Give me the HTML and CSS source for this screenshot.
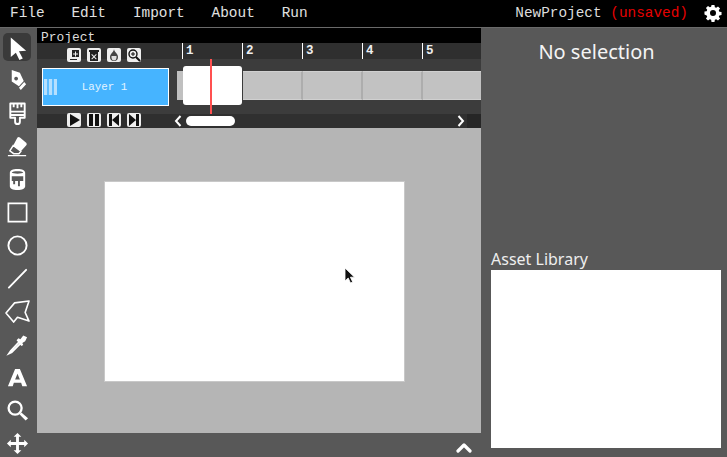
FILE: index.html
```html
<!DOCTYPE html>
<html lang="en">
<head>
<meta charset="utf-8">
<title>NewProject</title>
<link rel="stylesheet" href="styles.css">
</head>
<body>
<div class="app">
  <header class="menubar">
    <nav class="menu">
      <span>File</span><span>Edit</span><span>Import</span><span>About</span><span>Run</span>
    </nav>
    <div class="status">
      <span class="project-name">NewProject <span class="unsaved">(unsaved)</span></span>
      <svg class="gear" viewBox="0 0 24 24" width="16" height="16"><path fill="#fff" fill-rule="evenodd" d="M9.800 0h4.400l.6 3.300 2 .8 2.700-1.900 3.100 3.100-1.900 2.700.8 2 3.300.6v4.400l-3.300.6-.8 2 1.900 2.700-3.100 3.100-2.700-1.900-2 .8-.6 3.300H9.800l-.6-3.300-2-.8-2.700 1.900-3.100-3.100 1.900-2.700-.8-2L-.8 14.200V9.800l3.300-.6.8-2-1.900-2.700 3.100-3.100 2.700 1.900 2-.8zM12 7.500a4.500 4.500 0 1 0 0 9 4.500 4.500 0 0 0 0-9z"/></svg>
    </div>
  </header>
  <div class="workspace">
    <aside class="tools">
      <div class="tool active"><svg viewBox="0 0 24 24"><path d="M5 1.500l16 14-7.500.5 4 7.500-3.500 1.500-3.700-7.500L5 22z"/></svg></div>
      <div class="tool"><svg viewBox="0 0 24 24"><path fill-rule="evenodd" d="M6 1l8.500 3 4 8.500-5 5.500L6 13zM10.500 8a2 2 0 1 0 .1 0zM13.500 19.500l5.500-6 2 2.500-5.500 6z"/></svg></div>
      <div class="tool"><svg viewBox="0 0 24 24"><path fill="none" stroke="#fff" stroke-width="2" stroke-linejoin="round" d="M4.500 1.500h15v12h-15zM4.500 10h15M4.500 13.500v3h5v4a2.500 2.500 0 0 0 5 0v-4h5v-3M8 1.500v4M12 1.500v5M16 1.500v4"/></svg></div>
      <div class="tool"><svg viewBox="0 0 24 24"><path d="M12 2.500a2 2 0 0 1 2.500 0L21 8a2 2 0 0 1 .2 2.700L15.500 17 7.500 11z"/><path fill="none" stroke="#fff" stroke-width="1.500" d="M7.500 11l8 6-2 2.500H8L4 16.500zM2 21.500h19"/></svg></div>
      <div class="tool"><svg viewBox="0 0 24 24"><path fill-rule="evenodd" d="M12 1c5 0 8 1.500 8 4v14c0 2.500-3 4-8 4s-8-1.500-8-4V5c0-2.500 3-4 8-4zM6 4.800c1 1.500 11 1.500 12 0-1-1.800-11-1.800-12 0zM6 8.500v5h1.500v3.500h2v-3.500h3V19h2v-5.500h3.500v-5z"/></svg></div>
      <div class="tool"><svg viewBox="0 0 24 24"><path fill="none" stroke="#fff" stroke-width="1.800" d="M2.500 2.500h19v19h-19z"/></svg></div>
      <div class="tool"><svg viewBox="0 0 24 24"><circle cx="12" cy="12" r="9.500" fill="none" stroke="#fff" stroke-width="2"/></svg></div>
      <div class="tool"><svg viewBox="0 0 24 24"><path fill="none" stroke="#fff" stroke-width="2" stroke-linecap="round" d="M3 21.500L21 3"/></svg></div>
      <div class="tool"><svg viewBox="0 0 24 24"><path fill="none" stroke="#fff" stroke-width="1.700" stroke-linejoin="round" d="M0 13.500L9 3l15-2-4 12 4 9-12-4-4 5z"/></svg></div>
      <div class="tool"><svg viewBox="0 0 24 24"><path fill="none" stroke="#fff" stroke-width="1.800" d="M15 8L5 18.500l-2 3 3-1.500L16.500 9.500"/><path d="M13 5.500l2 1 3-4 4 2-2 4-3 2 1 2-2 1-5-6z"/></svg></div>
      <div class="tool"><svg viewBox="0 0 24 24"><path d="M9.500 3h5L22 21h-5l-1.200-3.500H8.200L7 21H2zM12 8l-2.500 6h5z" fill-rule="evenodd"/></svg></div>
      <div class="tool"><svg viewBox="0 0 24 24"><circle cx="9.500" cy="9.500" r="6.800" fill="none" stroke="#fff" stroke-width="2.400"/><path d="M14 16l2-2 7 6-2.500 2.500z"/></svg></div>
      <div class="tool"><svg viewBox="0 0 24 24"><path d="M12 1l4 4h-2.500v5.500H19V8l4 4-4 4v-2.500h-5.500V19H16l-4 4-4-4h2.500v-5.500H5V16l-4-4 4-4v2.500h5.500V5H8z"/></svg></div>
    </aside>
    <main class="center">
      <section class="timeline">
        <div class="title">Project</div>
        <div class="ruler-row">
          <div class="mini-icons">
            <span class="mini"><svg viewBox="0 0 14 14"><path fill="#222" d="M5 2h7v7H5zM2 5h1v7h7v-1H3V5zM8 3.500v2H6v1h2v2h1v-2h2v-1H9v-2z" fill-rule="evenodd"/></svg></span>
            <span class="mini"><svg viewBox="0 0 14 14"><path fill="#222" fill-rule="evenodd" d="M2 2h10v2h-1v9H3V4H2zM5 6l2 2 2-2 .7.700-2 2 2 2-.7.700-2-2-2 2-.7-.7 2-2-2-2z"/></svg></span>
            <span class="mini"><svg viewBox="0 0 14 14"><path fill="#444" d="M7 1c0 3-4 4.500-4 8a4 4 0 0 0 8 0c0-3.500-4-5-4-8z"/><path fill="#ddd" d="M4.500 8h5v2a2.500 2.500 0 0 1-5 0z"/></svg></span>
            <span class="mini"><svg viewBox="0 0 14 14"><circle cx="6" cy="6" r="4" fill="none" stroke="#111" stroke-width="1.400"/><path stroke="#111" stroke-width="2" d="M9 9l4 4"/><path stroke="#111" d="M4 6h4M6 4v4"/></svg></span>
          </div>
          <div class="ruler">
            <span class="tick">1</span><span class="tick">2</span><span class="tick">3</span><span class="tick">4</span><span class="tick">5</span>
          </div>
        </div>
        <div class="layers-row">
          <div class="layer">
            <span class="grip"><i></i><i></i><i></i></span>
            <span class="layer-name">Layer 1</span>
          </div>
          <div class="frames">
            <div class="frame-stub"></div>
            <div class="frame current"></div>
            <div class="frame"></div>
            <div class="frame"></div>
            <div class="frame"></div>
            <div class="frame"></div>
            <div class="playhead"></div>
          </div>
        </div>
        <div class="controls-row">
          <div class="playback">
            <span class="mini"><svg viewBox="0 0 14 14"><path fill="#111" d="M3 1l10 6-10 6z"/></svg></span>
            <span class="mini"><svg viewBox="0 0 14 14"><path fill="#111" d="M2 1h4v12H2zM8 1h4v12H8z"/></svg></span>
            <span class="mini"><svg viewBox="0 0 14 14"><path fill="#111" d="M2 1h3v12H2zM12 1v12L5 7z"/></svg></span>
            <span class="mini"><svg viewBox="0 0 14 14"><path fill="#111" d="M9 1h3v12H9zM2 1v12l7-6z"/></svg></span>
          </div>
          <div class="scrollbar">
            <svg class="arrow" viewBox="0 0 8 12"><path fill="none" stroke="#fff" stroke-width="2" d="M6.500 1L2 6l4.500 5"/></svg>
            <div class="thumb"></div>
            <svg class="arrow end" viewBox="0 0 8 12"><path fill="none" stroke="#fff" stroke-width="2" d="M1.500 1L6 6l-4.500 5"/></svg>
          </div>
          <div class="corner"></div>
        </div>
      </section>
      <section class="stage">
        <div class="canvas"></div>
        <svg class="cursor" viewBox="0 0 12 18" width="12" height="18"><path fill="#111" stroke="#fff" stroke-width=".8" d="M1 1v13l3.200-3 2.300 5 2.200-1-2.300-4.800H10.500z"/></svg>
      </section>
      <footer class="drawer">
        <svg viewBox="0 0 16 10" width="16" height="10"><path fill="none" stroke="#fff" stroke-width="3.200" stroke-linecap="round" stroke-linejoin="round" d="M2 8l6-6 6 6"/></svg>
      </footer>
    </main>
    <aside class="inspector">
      <h2 class="no-selection">No selection</h2>
      <h3 class="asset-title">Asset Library</h3>
      <div class="assets"></div>
    </aside>
  </div>
</div>
</body>
</html>
```

FILE: styles.css
```css
* { box-sizing: border-box; }
html, body { margin: 0; padding: 0; height: 100%; overflow: hidden; }
body { background: #585858; color: #fff; font-family: "Liberation Mono", monospace; }
.app { width: 727px; height: 457px; display: flex; flex-direction: column; }

.menubar { height: 28px; flex: none; background: #000; border-bottom: 1px solid #6a6a6a; display: flex; justify-content: space-between; align-items: center; padding: 0 6px 1px 10px; }
.menu { display: flex; gap: 26.900px; font-size: 14.400px; color: #e0e0e0; }
.status { display: flex; align-items: center; gap: 17px; font-size: 14.400px; }
.project-name { color: #dcdcdc; }
.unsaved { color: #e60000; }
.gear { display: block; margin-bottom: 1px; overflow: visible; }

.workspace { flex: 1; display: flex; min-height: 0; }

.tools { width: 37px; flex: none; display: flex; flex-direction: column; align-items: center; padding: 5px 3px 0 0; gap: 5px; background: #585858; }
.tool { width: 28px; height: 28px; flex: none; display: flex; align-items: center; justify-content: center; border-radius: 5px; }
.tool svg { width: 23px; height: 23px; fill: #fff; overflow: visible; }
.tool.active { background: #3a3a3a; }

.center { width: 444px; flex: none; display: flex; flex-direction: column; }

.timeline { flex: none; display: flex; flex-direction: column; }
.title { height: 15px; background: #000; font-size: 12.900px; line-height: 19px; padding-left: 4px; color: #dcdcdc; }
.ruler-row { height: 16px; display: flex; background: #2f2f2f; position: relative; z-index: 1; }
.mini-icons { width: 145px; flex: none; display: flex; gap: 6px; padding: 5px 0 0 30px; }
.mini { width: 14px; height: 14px; flex: none; background: #eee; border-radius: 2px; display: block; }
.mini svg { display: block; width: 14px; height: 14px; }
.ruler { flex: 1; display: flex; overflow: hidden; }
.tick { width: 60px; flex: none; border-left: 1px solid #fff; font-size: 12.500px; line-height: 16px; padding-left: 3px; font-weight: bold; color: #eee; }

.layers-row { height: 55px; display: flex; background: #3c3c3c; }
.layer { width: 127px; height: 38px; margin: 9px 0 0 5px; flex: none; background: #46b4ff; border: 1px solid #fff; display: flex; align-items: center; position: relative; }
.grip { display: flex; gap: 2px; margin-left: 1px; background: #5dbcff; }
.grip i { width: 3px; height: 16px; background: #b5e0ff; display: block; }
.layer-name { position: absolute; left: 0; right: 2px; text-align: center; font-size: 10.800px; color: #e4f4ff; }
.frames { flex: 1; display: flex; align-items: flex-start; padding: 12px 0 0 8px; position: relative; overflow: hidden; }
.frame-stub { width: 6px; height: 29px; flex: none; background: #c0c0c0; }
.frame { width: 60px; height: 29px; flex: none; background: #c2c2c2; border-right: 2px solid #adadad; border-top: 1px solid #d0d0d0; border-bottom: 1px solid #d0d0d0; }
.frame.current { background: #fff; border: none; height: 39px; margin-top: -5px; border-radius: 3px; width: 59px; margin-right: 1px; }
.playhead { position: absolute; left: 41px; top: 0; width: 2px; height: 55px; background: #ff5050; }

.controls-row { height: 14px; display: flex; background: #2f2f2f; }
.playback { width: 136px; flex: none; display: flex; gap: 6px; padding-left: 30px; margin-top: -1px; }
.scrollbar { flex: 1; display: flex; align-items: center; padding-left: 1px; background: #303030; }
.arrow { width: 8px; height: 12px; flex: none; display: block; }
.arrow.end { margin-left: auto; margin-right: 2px; }
.thumb { width: 49px; height: 10px; border-radius: 5px; background: #fff; margin-left: 4px; }
.corner { width: 14px; flex: none; background: #262626; }

.stage { flex: 1; min-height: 0; background: #b5b5b5; padding: 53px 0 0 67px; position: relative; }
.canvas { width: 301px; height: 201px; background: #fff; border: 1px solid #c8c8c8; }
.cursor { position: absolute; left: 307px; top: 139px; }

.drawer { height: 24px; flex: none; background: #585858; display: flex; justify-content: flex-end; align-items: center; padding: 5px 9px 0 0; }
.drawer svg { display: block; }

.inspector { flex: 1; min-width: 0; background: #585858; display: flex; flex-direction: column; padding: 0 6px 9px 10px; }
.no-selection { margin: 11px 19px 0 0; font: 400 20px/26px "Noto Sans", sans-serif; text-align: center; color: #f4f4f4; }
.asset-title { margin: 183px 0 0; font: 400 16px/22px "Noto Sans", sans-serif; color: #eee; }
.assets { flex: 1; background: #fff; }
```
